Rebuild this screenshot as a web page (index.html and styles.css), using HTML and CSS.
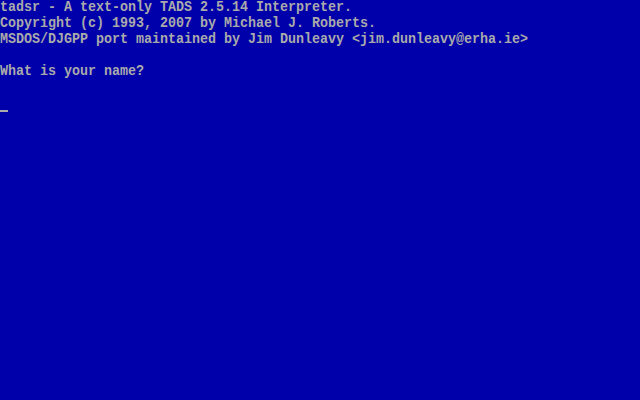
FILE: index.html
```html
<!DOCTYPE html>
<html>
<head>
<meta charset="utf-8">
<link rel="stylesheet" href="styles.css">
</head>
<body>
<div class="screen">
<div class="line">tadsr - A text-only TADS 2.5.14 Interpreter.</div>
<div class="line">Copyright (c) 1993, 2007 by Michael J. Roberts.</div>
<div class="line">MSDOS/DJGPP port maintained by Jim Dunleavy &lt;jim.dunleavy@erha.ie&gt;</div>
<div class="line"></div>
<div class="line">What is your name?</div>
<div class="line"></div>
<div class="line"><span class="cursor"></span></div>
</div>
</body>
</html>
```
FILE: styles.css
```css
html, body {
  margin: 0;
  padding: 0;
  background: #0000aa;
  width: 640px;
  height: 400px;
  overflow: hidden;
}
.screen {
  margin: 0;
  padding: 0;
  font-family: "Liberation Mono", "DejaVu Sans Mono", monospace;
  font-size: 13.333px;
  font-weight: bold;
  line-height: 16px;
  color: #aaaaaa;
}
.line {
  height: 16px;
  white-space: pre;
  transform: scaleY(1.12);
  transform-origin: 0 7px;
}
.cursor {
  display: inline-block;
  width: 8px;
  height: 16px;
  vertical-align: top;
  background: linear-gradient(transparent 13px, #aaaaaa 13px, #aaaaaa 15px, transparent 15px);
}
```
